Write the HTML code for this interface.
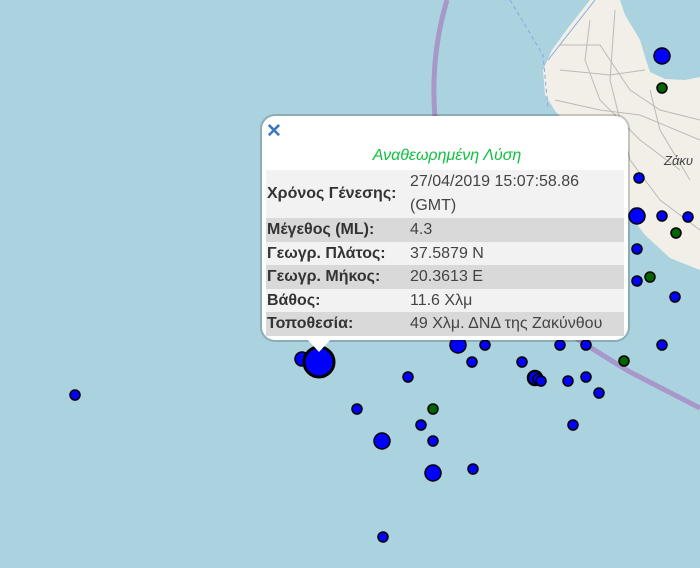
<!DOCTYPE html>
<html><head><meta charset="utf-8"><style>
body{margin:0;width:700px;height:568px;overflow:hidden;background:#abd3df;font-family:"Liberation Sans",sans-serif;position:relative}
svg{position:absolute;left:0;top:0}
.pop{position:absolute;left:262px;top:116px;width:366px;height:224px;background:#fff;border-radius:13px;box-shadow:0 0 0 2px rgba(0,0,0,0.18)}
.tip{position:absolute;left:307px;top:339px;width:0;height:0;border-left:12px solid transparent;border-right:12px solid transparent;border-top:13px solid #fff}
.x{position:absolute;left:266px;top:121px;color:#3b78c2;font-size:19px;font-weight:bold;line-height:22px}
.title{position:absolute;left:264px;width:366px;top:147px;text-align:center;color:#10c040;font-style:italic;font-size:16px}
table{position:absolute;left:266px;top:170px;width:358px;border-collapse:collapse;font-size:16px}
td{padding:0 0 0 1px;height:23.6px;line-height:23.6px;white-space:nowrap}
td.l{font-weight:bold;color:#333;width:139px}
td.v{color:#444;padding-left:4px}
tr:nth-child(odd){background:#f2f2f2}
tr:nth-child(even){background:#d9d9d9}
</style></head><body>
<svg width="700" height="568">
<path d="M590,0 L620,0 L625,15 L640,40 L646,60 L650,72 L665,79 L685,80 L700,77 L700,270 L670,258 L645,235 L630,215 L620,195 L600,160 L575,130 L556,112 L545,95 L543,70 L552,50 L568,28 Z" fill="#f2efe9"/>
<g stroke="#bdb9b4" stroke-width="1" fill="none">
<path d="M560,45 L600,45 L630,90 L660,110 L700,120"/>
<path d="M590,20 L585,60 L600,100 L640,140 L680,170"/>
<path d="M555,100 L600,110 L640,115 L700,140"/>
<path d="M615,10 L610,80 L630,160 L660,200 L700,230"/>
<path d="M560,70 L610,75 L645,70"/>
<path d="M650,90 L660,130 L690,180"/>
</g>
<path d="M595,0 L548,60" stroke="#8aa8e0" stroke-width="1" fill="none"/>
<path d="M510,0 L543,55 L548,108" stroke="#8aa8e0" stroke-width="1" stroke-dasharray="4,3" fill="none"/>
<path d="M447,0 C426,70 428,160 470,240 C510,300 570,335 630,372 L700,408" stroke="#a690c8" stroke-width="5" fill="none" opacity="0.9"/>
<text x="664" y="165" font-family="Liberation Sans" font-style="italic" font-size="13" fill="#444">Ζάκυ</text>
<g stroke="#000" stroke-width="1.5">
<circle cx="662" cy="56" r="8" fill="#00f"/>
<circle cx="662" cy="88" r="5" fill="#006400"/>
<circle cx="639" cy="178" r="5" fill="#00f"/>
<circle cx="637" cy="216" r="8" fill="#00f"/>
<circle cx="662" cy="216" r="5" fill="#00f"/>
<circle cx="688" cy="217" r="5" fill="#00f"/>
<circle cx="676" cy="233" r="5" fill="#006400"/>
<circle cx="637" cy="249" r="5" fill="#00f"/>
<circle cx="650" cy="277" r="5" fill="#006400"/>
<circle cx="637" cy="281" r="5" fill="#00f"/>
<circle cx="675" cy="297" r="5" fill="#00f"/>
<circle cx="662" cy="345" r="5" fill="#00f"/>
<circle cx="624" cy="361" r="5" fill="#006400"/>
<circle cx="599" cy="393" r="5" fill="#00f"/>
<circle cx="302" cy="359" r="7" fill="#00f"/>
<circle cx="458" cy="345" r="8" fill="#00f"/>
<circle cx="485" cy="345" r="5" fill="#00f"/>
<circle cx="560" cy="345" r="5" fill="#00f"/>
<circle cx="586" cy="345" r="5" fill="#00f"/>
<circle cx="472" cy="362" r="5" fill="#00f"/>
<circle cx="522" cy="362" r="5" fill="#00f"/>
<circle cx="408" cy="377" r="5" fill="#00f"/>
<circle cx="535" cy="378" r="7" fill="#00f" stroke-width="2.5"/>
<circle cx="538" cy="379" r="5" fill="#00f"/>
<circle cx="541" cy="381" r="5" fill="#00f"/>
<circle cx="568" cy="381" r="5" fill="#00f"/>
<circle cx="586" cy="377" r="5" fill="#00f"/>
<circle cx="357" cy="409" r="5" fill="#00f"/>
<circle cx="433" cy="409" r="5" fill="#006400"/>
<circle cx="421" cy="425" r="5" fill="#00f"/>
<circle cx="573" cy="425" r="5" fill="#00f"/>
<circle cx="382" cy="441" r="8" fill="#00f"/>
<circle cx="433" cy="441" r="5" fill="#00f"/>
<circle cx="473" cy="469" r="5" fill="#00f"/>
<circle cx="433" cy="473" r="8" fill="#00f"/>
<circle cx="383" cy="537" r="5" fill="#00f"/>
<circle cx="75" cy="395" r="5" fill="#00f"/>
<circle cx="319" cy="362" r="15" fill="#00f" stroke-width="3"/>
</g>
</svg>
<div class="pop"></div>
<div class="tip"></div>
<div class="x">✕</div>
<div class="title">Αναθεωρημένη Λύση</div>
<table>
<tr><td class="l" style="height:47px">Χρόνος Γένεσης:</td><td class="v" style="line-height:24px">27/04/2019 15:07:58.86<br>(GMT)</td></tr>
<tr><td class="l">Μέγεθος (ML):</td><td class="v">4.3</td></tr>
<tr><td class="l">Γεωγρ. Πλάτος:</td><td class="v">37.5879 N</td></tr>
<tr><td class="l">Γεωγρ. Μήκος:</td><td class="v">20.3613 E</td></tr>
<tr><td class="l">Βάθος:</td><td class="v">11.6 Χλμ</td></tr>
<tr><td class="l">Τοποθεσία:</td><td class="v">49 Χλμ. ΔΝΔ της Ζακύνθου</td></tr>
</table>
</body></html>
